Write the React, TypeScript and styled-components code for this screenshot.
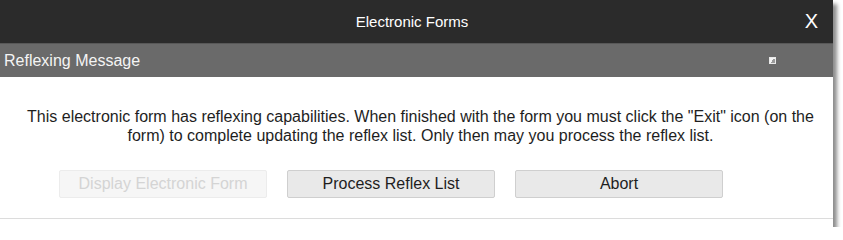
import styled, { createGlobalStyle } from 'styled-components';

const GlobalStyle = createGlobalStyle`
  body {
    margin: 0;
    background: #ffffff;
    font-family: 'Liberation Sans', Arial, sans-serif;
  }
`;

const Dialog = styled.div`
  width: 833px;
  background: #ffffff;
  box-shadow: 4px 4px 4px rgba(0, 0, 0, 0.45);
`;

const TitleBar = styled.div`
  height: 43px;
  background: #2b2b2b;
  border-bottom: 1px solid #585858;
  display: flex;
  align-items: center;
  justify-content: center;
  padding-right: 9px;
  position: relative;
  color: #ffffff;
  font-size: 15px;
`;

const Close = styled.span`
  position: absolute;
  right: 15px;
  top: 10px;
  font-size: 20px;
  line-height: 22px;
  color: #ffffff;
`;

const SubHeader = styled.div`
  height: 33px;
  background: #6a6a6a;
  display: flex;
  align-items: center;
  justify-content: space-between;
  padding: 0 57px 0 4px;
  color: #f4f4f4;
  font-size: 16px;
`;

const Grip = styled.span`
  width: 7px;
  height: 7px;
  background: linear-gradient(135deg, #f4f4f4 50%, #9a9a9a 50%);
  border: 1px solid #e8e8e8;
  box-sizing: border-box;
`;

const Body = styled.div`
  padding: 30px 6px 20px 14px;
  border-bottom: 1px solid #dcdcdc;
`;

const Message = styled.p`
  margin: 0 0 25px;
  text-align: center;
  font-size: 16px;
  line-height: 19px;
  color: #1e1e1e;
`;

const Buttons = styled.div`
  display: flex;
  gap: 20px;
  padding-left: 45px;
`;

const Button = styled.button<{ $disabled?: boolean }>`
  width: 208px;
  height: 28px;
  font-family: 'Liberation Sans', Arial, sans-serif;
  font-size: 16px;
  border-radius: 2px;
  border: 1px solid ${(p) => (p.$disabled ? '#ececec' : '#cfcfcf')};
  background: ${(p) => (p.$disabled ? '#f6f6f6' : '#e9e9e9')};
  color: ${(p) => (p.$disabled ? '#d4d4d4' : '#1e1e1e')};
  padding: 0;
`;

const Footer = styled.div`
  height: 8px;
`;

const App = () => (
  <>
    <GlobalStyle />
    <Dialog>
      <TitleBar>
        Electronic Forms
        <Close>X</Close>
      </TitleBar>
      <SubHeader>
        Reflexing Message
        <Grip />
      </SubHeader>
      <Body>
        <Message>
          This electronic form has reflexing capabilities. When finished with the form you must click the "Exit" icon (on the
          <br />
          form) to complete updating the reflex list. Only then may you process the reflex list.
        </Message>
        <Buttons>
          <Button $disabled>Display Electronic Form</Button>
          <Button>Process Reflex List</Button>
          <Button>Abort</Button>
        </Buttons>
      </Body>
      <Footer />
    </Dialog>
  </>
);

export default App;
